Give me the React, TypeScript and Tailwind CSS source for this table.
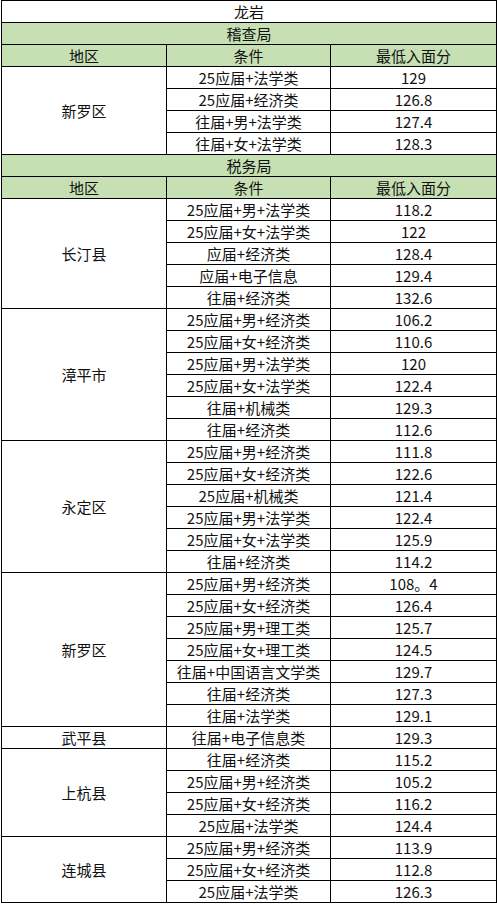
import React from 'react';

type Row = [string, string];
type Group = { area: string; rows: Row[] };

const jicha: Group[] = [
  {
    area: '新罗区',
    rows: [
      ['25应届+法学类', '129'],
      ['25应届+经济类', '126.8'],
      ['往届+男+法学类', '127.4'],
      ['往届+女+法学类', '128.3'],
    ],
  },
];

const shuiwu: Group[] = [
  {
    area: '长汀县',
    rows: [
      ['25应届+男+法学类', '118.2'],
      ['25应届+女+法学类', '122'],
      ['应届+经济类', '128.4'],
      ['应届+电子信息', '129.4'],
      ['往届+经济类', '132.6'],
    ],
  },
  {
    area: '漳平市',
    rows: [
      ['25应届+男+经济类', '106.2'],
      ['25应届+女+经济类', '110.6'],
      ['25应届+男+法学类', '120'],
      ['25应届+女+法学类', '122.4'],
      ['往届+机械类', '129.3'],
      ['往届+经济类', '112.6'],
    ],
  },
  {
    area: '永定区',
    rows: [
      ['25应届+男+经济类', '111.8'],
      ['25应届+女+经济类', '122.6'],
      ['25应届+机械类', '121.4'],
      ['25应届+男+法学类', '122.4'],
      ['25应届+女+法学类', '125.9'],
      ['往届+经济类', '114.2'],
    ],
  },
  {
    area: '新罗区',
    rows: [
      ['25应届+男+经济类', '108。4'],
      ['25应届+女+经济类', '126.4'],
      ['25应届+男+理工类', '125.7'],
      ['25应届+女+理工类', '124.5'],
      ['往届+中国语言文学类', '129.7'],
      ['往届+经济类', '127.3'],
      ['往届+法学类', '129.1'],
    ],
  },
  {
    area: '武平县',
    rows: [['往届+电子信息类', '129.3']],
  },
  {
    area: '上杭县',
    rows: [
      ['往届+经济类', '115.2'],
      ['25应届+男+经济类', '105.2'],
      ['25应届+女+经济类', '116.2'],
      ['25应届+法学类', '124.4'],
    ],
  },
  {
    area: '连城县',
    rows: [
      ['25应届+男+经济类', '113.9'],
      ['25应届+女+经济类', '112.8'],
      ['25应届+法学类', '126.3'],
    ],
  },
];

const cell = 'border border-black text-center align-middle p-0 leading-none';
const green = 'bg-[#c6e0b4]';

function Section({ title, groups }: { title: string; groups: Group[] }) {
  return (
    <>
      <tr className="h-[22px]">
        <td colSpan={3} className={`${cell} ${green}`}>{title}</td>
      </tr>
      <tr className="h-[22px]">
        <td className={`${cell} ${green}`}>地区</td>
        <td className={`${cell} ${green}`}>条件</td>
        <td className={`${cell} ${green}`}>最低入面分</td>
      </tr>
      {groups.map((g, gi) =>
        g.rows.map((r, i) => (
          <tr key={`${gi}-${i}`} className="h-[22px]">
            {i === 0 && (
              <td rowSpan={g.rows.length} className={cell}>
                {g.area}
              </td>
            )}
            <td className={cell}>{r[0]}</td>
            <td className={cell}>{r[1]}</td>
          </tr>
        ))
      )}
    </>
  );
}

export default function App() {
  return (
    <div
      className="bg-white w-[497px] pl-px text-[#111] text-[15px]"
      style={{ fontFamily: '"Noto Sans CJK SC", "Noto Sans", sans-serif' }}
    >
      <table className="border-collapse table-fixed w-[495px]">
        <colgroup>
          <col className="w-[165px]" />
          <col className="w-[164px]" />
          <col className="w-[166px]" />
        </colgroup>
        <tbody>
          <tr className="h-[22px]">
            <td colSpan={3} className={cell}>龙岩</td>
          </tr>
          <Section title="稽查局" groups={jicha} />
          <Section title="税务局" groups={shuiwu} />
        </tbody>
      </table>
    </div>
  );
}
